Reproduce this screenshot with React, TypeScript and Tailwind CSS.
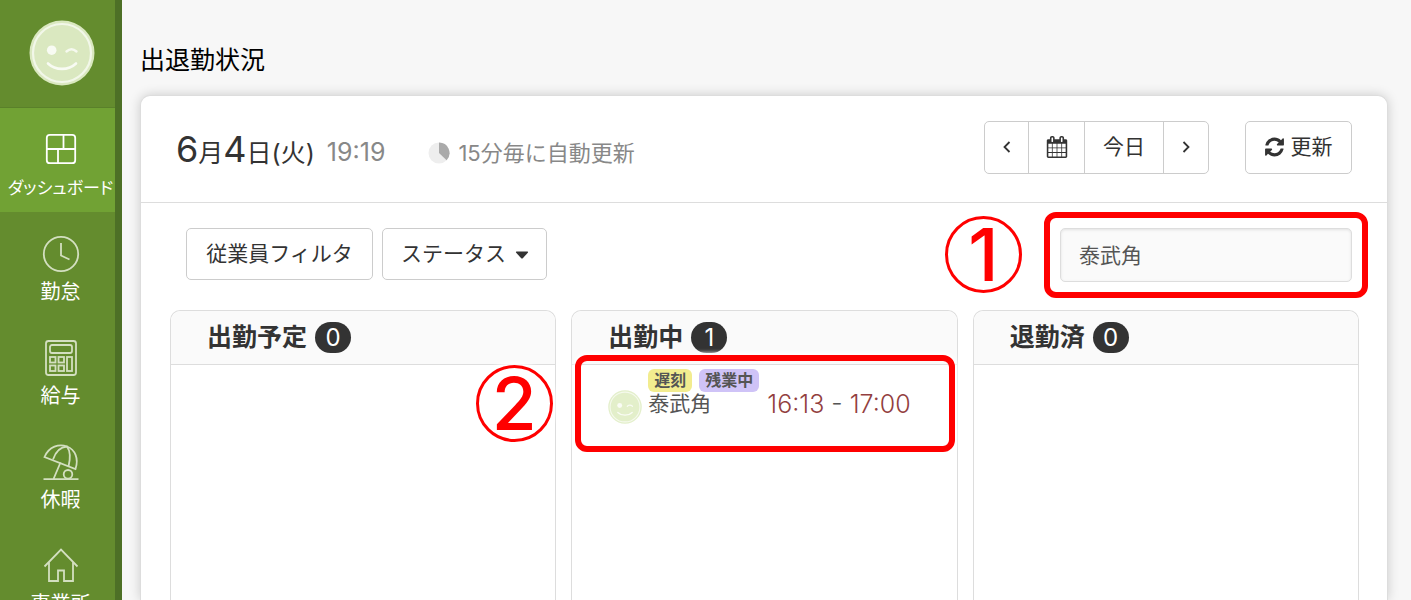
import {useState} from "react";
import type {ReactNode} from "react";
import {clsx} from "clsx";

type IconProps = {className?: string};

function FaceIcon({className}: IconProps) {
  return (
    <svg viewBox="0 0 66 66" className={className} fill="none" aria-hidden="true">
      <circle cx="33" cy="33" r="32.5" fill="currentColor" />
      <circle cx="33" cy="33" r="29" stroke="#fff" strokeOpacity=".65" strokeWidth="2.2" />
      <circle cx="22.7" cy="30.2" r="4.8" fill="#fff" fillOpacity=".8" />
      <path d="M37.5 31.5q5-4.6 10 0" stroke="#fff" strokeOpacity=".75" strokeWidth="2.4" strokeLinecap="round" />
      <path d="M19 43.5c7.5 7.2 20.5 7.2 28 0" stroke="#fff" strokeOpacity=".8" strokeWidth="2.6" strokeLinecap="round" />
    </svg>
  );
}

function LineIcon({children}: {children: ReactNode}) {
  return (
    <svg viewBox="0 0 40 40" className="size-10" fill="none" stroke="currentColor" strokeWidth="1.8" aria-hidden="true">
      {children}
    </svg>
  );
}

const navItems = [
  {
    label: "ダッシュボード",
    icon: (
      <>
        <rect x="5.8" y="5.8" width="28.4" height="28.4" rx="3" />
        <path d="M5.8 20h28.4M22.5 5.8V20M17 20v14.2" />
      </>
    )
  },
  {
    label: "勤怠",
    icon: (
      <>
        <circle cx="20" cy="20" r="17.2" />
        <path d="M20 9v12.5l8.500 4" />
      </>
    )
  },
  {
    label: "給与",
    icon: (
      <>
        <rect x="5" y="3" width="30" height="34" rx="2.5" />
        <rect x="9" y="7" width="22" height="8" rx="2" />
        <rect x="9" y="19" width="5.5" height="5.5" />
        <rect x="17.5" y="19" width="5.5" height="5.5" />
        <rect x="9" y="27.5" width="5.5" height="5.5" />
        <rect x="17.5" y="27.5" width="5.5" height="5.5" />
        <rect x="26" y="19" width="5" height="14" />
      </>
    )
  },
  {
    label: "休暇",
    icon: (
      <>
        <path d="M3.5 15C8 4.5 18 1.5 26 4.500s12 12 8.500 22.500z" />
        <path d="M12 17.5C14.5 10 19 5 26 4.500c4 5.500 3.500 12 1.500 20M19.500 20.500L12.500 37M2.500 37.200h35" />
        <circle cx="27" cy="32.3" r="4.3" />
      </>
    )
  },
  {
    label: "事業所",
    icon: <path d="M3.5 20.5L20 3.500l16.500 17M8 16.500V35h9V24.500h6V35h9V16.500" />
  }
];

function CalendarIcon() {
  return (
    <svg viewBox="0 0 1792 1792" className="size-[22px]" fill="currentColor" aria-hidden="true">
      <path d="M192 1664h288v-288h-288v288zm352 0h320v-288h-320v288zm-352-352h288v-320h-288v320zm352 0h320v-320h-320v320zm-352-384h288v-288h-288v288zm736 736h320v-288h-320v288zm-384-736h320v-288h-320v288zm768 736h288v-288h-288v288zm-384-352h320v-320h-320v320zm-352-864v-288q0-13-9.5-22.5t-22.5-9.5h-64q-13 0-22.5 9.5t-9.5 22.5v288q0 13 9.5 22.5t22.5 9.5h64q13 0 22.5-9.5t9.5-22.5zm736 864h288v-320h-288v320zm-384-384h320v-288h-320v288zm384 0h288v-288h-288v288zm32-480v-288q0-13-9.5-22.5t-22.5-9.5h-64q-13 0-22.5 9.5t-9.5 22.5v288q0 13 9.5 22.5t22.5 9.5h64q13 0 22.5-9.5t9.5-22.5zm384-64v1280q0 52-38 90t-90 38h-1408q-52 0-90-38t-38-90v-1280q0-52 38-90t90-38h128v-96q0-66 47-113t113-47h64q66 0 113 47t47 113v96h384v-96q0-66 47-113t113-47h64q66 0 113 47t47 113v96h128q52 0 90 38t38 90z" />
    </svg>
  );
}

function RefreshIcon() {
  return (
    <svg viewBox="0 0 1536 1792" className="h-[22px] w-[19px]" fill="currentColor" aria-hidden="true">
      <path d="M1511 1056q0 5-1 7-64 268-268 434.5t-478 166.5q-146 0-282.5-55t-243.5-157l-129 129q-19 19-45 19t-45-19-19-45v-448q0-26 19-45t45-19h448q26 0 45 19t19 45-19 45l-137 137q71 66 161 102t187 36q134 0 250-65t186-179q11-17 53-117 8-23 30-23h192q13 0 22.5 9.5t9.5 22.5zm25-800v448q0 26-19 45t-45 19h-448q-26 0-45-19t-19-45 19-45l138-138q-148-137-349-137-134 0-250 65t-186 179q-11 17-53 117-8 23-30 23h-199q-13 0-22.5-9.5t-9.5-22.5v-7q65-268 270-434.5t480-166.5q146 0 284 55.5t245 156.5l130-129q19-19 45-19t45 19 19 45z" />
    </svg>
  );
}

function Chevron({d}: {d: string}) {
  return (
    <svg viewBox="0 0 8 12" className="h-3 w-2" fill="none" stroke="currentColor" strokeWidth="1.8" aria-hidden="true">
      <path d={d} />
    </svg>
  );
}

function Marker({label, className}: {label: string; className: string}) {
  return (
    <span
      className={clsx(
        "absolute flex size-[77px] items-center justify-center rounded-full border-3 border-[#f00] bg-white text-[73px] leading-none font-medium text-[#f00] shadow-[0_0_5px_3px_#fff]",
        className
      )}
    >
      {label}
    </span>
  );
}

type ColumnProps = {
  title: string;
  count: number;
  children?: ReactNode;
};

function Column({title, count, children}: ColumnProps) {
  return (
    <section className="flex min-w-0 flex-1 flex-col rounded-t-[10px] border border-b-0 border-[#ddd] bg-white">
      <h2 className="flex h-[54px] items-center gap-2 rounded-t-[10px] border-b border-[#ddd] bg-[#fafafa] pl-9 text-[25px] leading-none font-bold">
        {title}
        <span className="flex h-[31px] w-9 items-center justify-center rounded-full bg-[#333] text-2xl leading-none font-normal text-white">
          {count}
        </span>
      </h2>
      {children}
    </section>
  );
}

export default function App() {
  const [query, setQuery] = useState("泰武角");

  return (
    <div className="flex h-screen overflow-hidden bg-[#f7f7f7] font-[Inter,'Noto_Sans_CJK_JP',sans-serif] text-[#333]">
      <nav className="w-[122px] shrink-0 border-r-7 border-[#4d7026] bg-[#648c2e] text-white">
        <a href="#profile" aria-label="プロフィール" className="flex h-[107px] items-center justify-center pb-[2px] pl-2">
          <FaceIcon className="size-[66px] text-[#dae8c0]" />
        </a>
        {navItems.map((item, i) => (
          <a
            key={item.label}
            href="#"
            className={clsx(
              "flex flex-col items-center pb-2 pl-[6px]",
              i === 0 ? "gap-1 border-t border-[#5a812a] bg-[#71a234] pt-[21px]" : "gap-[3px] pt-[22px]"
            )}
          >
            <span className={i === 0 ? "text-white" : "text-[#d3dfc0]"}>
              <LineIcon>{item.icon}</LineIcon>
            </span>
            <span
              className={clsx(
                "leading-[31px] whitespace-nowrap [font-feature-settings:'palt']",
                item.label.length > 5 ? "text-[17px]" : "text-xl"
              )}
            >
              {item.label}
            </span>
          </a>
        ))}
      </nav>

      <main className="flex min-w-0 flex-1 flex-col pt-10 pr-[23px] pl-[18px]">
        <h1 className="text-[25px] leading-10 text-black">出退勤状況</h1>

        <div className="mt-[15px] flex flex-1 flex-col rounded-t-[10px] border border-b-0 border-[#ddd] bg-white shadow-[0_0_12px_rgba(0,0,0,0.18)]">
          <header className="flex h-[107px] items-center border-b border-[#ddd] px-[35px] pb-1">
            <p className="mt-2 text-[25px] whitespace-nowrap">
              <span className="text-4xl">6</span>月<span className="text-4xl">4</span>日(火)
            </p>
            <time className="mt-3 ml-3 text-[25px] text-[#888]">19:19</time>
            <p className="mt-3 ml-[43px] flex items-center gap-2 text-[22px] whitespace-nowrap text-[#888]">
              <svg viewBox="0 0 22 22" className="size-[22px]" aria-hidden="true">
                <circle cx="11" cy="11" r="10.5" fill="#eee" />
                <path d="M11 11V.5a10.5 10.5 0 0 1 7.6 17.7z" fill="#aaa" />
              </svg>
              15分毎に自動更新
            </p>
            <div className="ml-auto flex h-[53px] divide-x divide-[#ccc] rounded-[5px] border border-[#ccc] text-[21px]">
              <button type="button" aria-label="前日" className="flex w-11 items-center justify-center">
                <Chevron d="M6.5 1L1.5 6l5 5" />
              </button>
              <button type="button" aria-label="カレンダー" className="flex w-14 items-center justify-center">
                <CalendarIcon />
              </button>
              <button type="button" className="w-[79px]">今日</button>
              <button type="button" aria-label="翌日" className="flex w-11 items-center justify-center">
                <Chevron d="M1.5 1l5 5-5 5" />
              </button>
            </div>
            <button
              type="button"
              className="ml-9 flex h-[53px] w-[107px] items-center justify-center gap-[7px] rounded-[5px] border border-[#ccc] text-[21px]"
            >
              <RefreshIcon />
              更新
            </button>
          </header>

          <div className="flex items-start gap-[9px] pt-[25px] pr-[35px] pl-[45px] text-[21px]">
            <button type="button" className="h-[52px] w-[187px] rounded-[5px] border border-[#ccc]">
              従業員フィルタ
            </button>
            <div className="relative">
              <select
                aria-label="ステータス"
                className="h-[52px] w-[165px] appearance-none rounded-[5px] border border-[#ccc] bg-white pl-[18px]"
              >
                <option>ステータス</option>
              </select>
              <svg
                viewBox="0 0 14 8"
                className="pointer-events-none absolute top-[23px] right-[18px] h-2 w-[14px]"
                fill="currentColor"
                aria-hidden="true"
              >
                <path d="M1.5.5h11q1 .5.3 1.3L8 7q-1 1-2 0L1.2 1.800Q.5 1 1.5.5z" />
              </svg>
            </div>
            <div className="relative ml-auto">
              <input
                type="text"
                aria-label="従業員検索"
                value={query}
                onChange={(e) => setQuery(e.target.value)}
                className="h-[54px] w-[292px] rounded-[5px] border border-[#ddd] bg-[#fafafa] px-[18px] pb-[2px] text-[#555] shadow-[inset_0_1px_3px_rgba(0,0,0,0.1)]"
              />
              <span className="pointer-events-none absolute -inset-4 rounded-xl border-6 border-[#f00]" />
              <Marker label="1" className="-top-3 right-[330px]" />
            </div>
          </div>

          <div className="mt-7 flex flex-1 gap-[15px] pr-7 pl-[29px]">
            <Column title="出勤予定" count={0} />
            <Column title="出勤中" count={1}>
              <div className="relative flex items-start pt-1 pl-9 text-[21px]">
                <span className="pointer-events-none absolute -top-[10px] right-[2px] -bottom-7 left-[3px] rounded-xl border-6 border-[#f00] shadow-[0_0_4px_2px_#fff]" />
                <Marker label="2" className="top-0 right-[404px]" />
                <FaceIcon className="mt-[21px] size-[34px] text-[#e3efca]" />
                <div className="ml-[6px] text-[#555]">
                  <p className="flex gap-[7px] text-base leading-[23px] font-bold whitespace-nowrap">
                    <span className="rounded-md bg-[#f2ec8f] px-[6px]">遅刻</span>
                    <span className="rounded-md bg-[#cfc3f7] px-[6px]">残業中</span>
                  </p>
                  <p className="leading-6">泰武角</p>
                </div>
                <p className="mt-[21px] ml-2 text-[25px] leading-7 font-light whitespace-nowrap text-[#933f3f]">
                  16:13 <span className="text-[#555]">-</span> 17:00
                </p>
              </div>
            </Column>
            <Column title="退勤済" count={0} />
          </div>
        </div>
      </main>
    </div>
  );
}
